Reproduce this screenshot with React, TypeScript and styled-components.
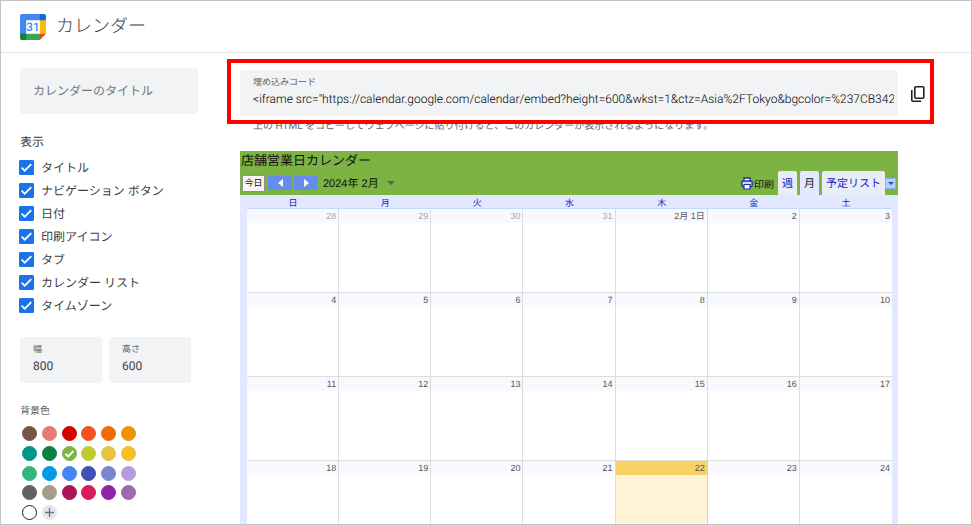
import React, { useState } from 'react';
import styled, { createGlobalStyle } from 'styled-components';

const GlobalStyle = createGlobalStyle`
  *, *::before, *::after { box-sizing: border-box; }
  body {
    margin: 0;
    background: #fff;
    color: #3c4043;
    font-family: Roboto, "Noto Sans CJK JP", sans-serif;
    text-rendering: geometricPrecision;
  }
  button, input { font: inherit; color: inherit; margin: 0; padding: 0; border: 0; background: none; text-rendering: inherit; }
  button { cursor: pointer; }
`;

const Page = styled.div`
  display: flex;
  flex-direction: column;
  height: 100vh;
  overflow: hidden;
  border: 1px solid #c4c4c4;
`;

const Header = styled.header`
  display: flex;
  align-items: center;
  flex: none;
  gap: 10px;
  height: 52px;
  padding: 0 19px;
  border-bottom: 1px solid #e2e2e2;
`;

const AppName = styled.h1`
  margin: 0;
  font-size: 18px;
  line-height: 24px;
  font-weight: 300;
  color: #3c4043;
`;

const Columns = styled.div`
  display: flex;
  flex: 1;
  min-height: 0;
`;

const Sidebar = styled.aside`
  display: flex;
  flex-direction: column;
  flex: none;
  width: 239px;
  padding: 15px 42px 0 19px;
`;

const Field = styled.label`
  display: flex;
  flex-direction: column;
  justify-content: center;
  flex: 1;
  min-width: 0;
  height: 46px;
  padding: 0 4px 0 13px;
  border-radius: 4px;
  background: #f1f3f4;
`;

const FieldLabel = styled.span`
  font-size: 9px;
  line-height: 12px;
  color: #5f6368;
`;

const FieldInput = styled.input<{ $code?: boolean }>`
  width: 100%;
  height: 20px;
  font-size: 12px;
  font-weight: ${(p) => (p.$code ? 300 : 400)};
  color: ${(p) => (p.$code ? '#000' : '#3c4043')};
  outline: none;
  text-overflow: clip;
  &::placeholder { color: #70757a; opacity: 1; }
`;

const TitleRow = styled.div`
  display: flex;
`;

const SizeRow = styled.div`
  display: flex;
  gap: 7px;
  margin: 20px 7px 0 0;
`;

const Group = styled.fieldset`
  margin: 18px 0 0;
  padding: 0;
  border: 0;
`;

const GroupTitle = styled.legend<{ $small?: boolean }>`
  padding: ${(p) => (p.$small ? 1 : 0)}px 0 0;
  font-size: ${(p) => (p.$small ? 10 : 12)}px;
  line-height: 20px;
  color: ${(p) => (p.$small ? '#5f6368' : '#3c4043')};
`;

const Options = styled.div`
  display: flex;
  flex-direction: column;
  padding-top: 4px;
`;

const Option = styled.label`
  display: flex;
  align-items: center;
  gap: 7px;
  height: 23px;
  margin-left: -1px;
  font-size: 12px;
`;

const Tick = styled.span`
  display: grid;
  width: 15px;
  height: 15px;
  > * { grid-area: 1 / 1; }
  svg { pointer-events: none; }
`;

const TickInput = styled.input`
  appearance: none;
  width: 15px;
  height: 15px;
  border: 1px solid #1a73e8;
  border-radius: 1px;
  &:checked { background: #1a73e8; }
`;

const Swatches = styled.div`
  display: grid;
  grid-template-columns: repeat(6, 15px);
  grid-auto-rows: 15px;
  justify-content: space-between;
  align-content: space-between;
  width: 114px;
  height: 94px;
  margin: 4px 0 0 2px;
`;

const Swatch = styled.label<{ $color: string; $edge?: string }>`
  display: grid;
  place-items: center;
  border-radius: 50%;
  background: ${(p) => p.$color};
  border: 1px solid ${(p) => p.$edge ?? p.$color};
  > * { grid-area: 1 / 1; }
`;

const SwatchInput = styled.input`
  appearance: none;
  width: 13px;
  height: 13px;
  border-radius: 50%;
`;

const AddColor = styled.button`
  display: grid;
  place-items: center;
  border-radius: 50%;
  background: #e4e7ea;
`;

const Main = styled.main`
  flex: 1;
  min-width: 0;
  padding: 17px 73px 0 0;
`;

const EmbedRow = styled.div`
  position: relative;
  display: flex;
  align-items: center;
`;

const Highlight = styled.div`
  position: absolute;
  inset: -11px -36px -8px -13px;
  border: 4px solid #fe0000;
  pointer-events: none;
`;

const CopyButton = styled.button`
  display: grid;
  place-items: center;
  width: 20px;
  height: 20px;
  margin: 2px -30px 0 10px;
`;

const Note = styled.p`
  margin: 0 13px;
  padding-top: 3px;
  font-size: 10px;
  line-height: 16px;
  color: #5f6368;
  white-space: nowrap;
`;

const Calendar = styled.section`
  margin-top: 16px;
  background: #e2e8ff;
  font-family: "Liberation Sans", "Noto Sans CJK JP", sans-serif;
  color: #111;
`;

const CalendarHead = styled.div`
  height: 44px;
  background: #7cb342;
`;

const CalendarTitle = styled.h2`
  margin: 0;
  padding-left: 1px;
  font-size: 13px;
  line-height: 20px;
  font-weight: 400;
`;

const Toolbar = styled.div`
  display: flex;
  align-items: center;
  height: 24px;
  padding: 0 2px;
`;

const Today = styled.button`
  width: 23px;
  height: 17px;
  border: 1px solid #8a9488;
  border-radius: 1px;
  background: #f6f6f6;
  font-size: 9px;
  line-height: 14px;
`;

const NavButton = styled.button`
  display: grid;
  place-items: center;
  width: 24px;
  height: 14px;
  margin-left: 2px;
  border-radius: 1px;
  background: #668cf0;
`;

const NavGroup = styled.div`
  display: flex;
  margin-left: 1px;
`;

const DateButton = styled.button`
  display: flex;
  align-items: center;
  gap: 8px;
  margin-left: 5px;
  font-size: 11px;
`;

const Print = styled.button`
  display: flex;
  align-items: center;
  gap: 1px;
  margin: 0 4px 0 auto;
  font-size: 10px;
`;

const Tabs = styled.div`
  display: flex;
  align-self: stretch;
  gap: 3px;
`;

const Tab = styled.button<{ $active?: boolean }>`
  padding: 0 4px;
  border-radius: 2px 2px 0 0;
  background: ${(p) => (p.$active ? '#e2e8ff' : '#e8eef7')};
  color: ${(p) => (p.$active ? '#222' : '#2a10cc')};
  font-size: 11px;
`;

const MenuButton = styled.button`
  display: grid;
  place-items: center;
  width: 11px;
  height: 11px;
  background: #b5d0f7;
  border: 1px solid #8fb4ea;
`;

const MonthTable = styled.table`
  width: calc(100% - 13px);
  margin-left: 7px;
  table-layout: fixed;
  border-collapse: separate;
  border-spacing: 0;
`;

const DayName = styled.th`
  height: 14px;
  padding: 3px 0 0;
  border-bottom: 1px solid #c3d9ff;
  color: #2a10cc;
  font-size: 9px;
  line-height: 10px;
  font-weight: 400;
  overflow: hidden;
`;

const DayCell = styled.td<{ $today?: boolean }>`
  height: 84px;
  padding: 0;
  vertical-align: top;
  background: ${(p) => (p.$today ? '#fff5d6' : '#fff')};
  border-right: 1px solid ${(p) => (p.$today ? '#fad163' : '#dddddd')};
  border-bottom: 1px solid #dddddd;
  &:last-child { border-right: 0; }
`;

const DayNumber = styled.div<{ $today?: boolean; $muted?: boolean }>`
  height: 14px;
  padding-right: 2px;
  background: ${(p) => (p.$today ? '#fad163' : '#f8f9ff')};
  color: ${(p) => (p.$muted ? '#a8a8a8' : '#555')};
  font-size: 9px;
  line-height: 14px;
  text-align: right;
`;

const colors = [
  '#795548', '#e67c73', '#d50000', '#f4511e', '#ef6c00', '#f09300',
  '#009688', '#0b8043', '#7cb342', '#c0ca33', '#e4c441', '#f6bf26',
  '#33b679', '#039be5', '#4285f4', '#3f51b5', '#7986cb', '#b39ddb',
  '#616161', '#a79b8e', '#ad1457', '#d81b60', '#8e24aa', '#9e69af',
  '#ffffff',
];

const options = ['タイトル', 'ナビゲーション ボタン', '日付', '印刷アイコン', 'タブ', 'カレンダー リスト', 'タイムゾーン'];
const dayNames = ['日', '月', '火', '水', '木', '金', '土'];
const weeks = [
  ['28', '29', '30', '31', '2月 1日', '2', '3'],
  ['4', '5', '6', '7', '8', '9', '10'],
  ['11', '12', '13', '14', '15', '16', '17'],
  ['18', '19', '20', '21', '22', '23', '24'],
];
const embedCode =
  '<iframe src="https://calendar.google.com/calendar/embed?height=600&wkst=1&ctz=Asia%2FTokyo&bgcolor=%237CB342';

const Logo = () => (
  <svg width="26" height="26" viewBox="-4 -4 200.5 200.5" aria-hidden="true">
    <path fill="#fff" d="M43 43h106v106H43z" />
    <path fill="#EA4335" d="M148.882 196.25l47.368-47.368-23.684-10.526-23.684 10.526-10.526 23.684z" />
    <path fill="#34A853" d="M33.092 172.566l10.526 23.684h105.263v-47.368H43.618z" />
    <path fill="#4285F4" d="M12.039-3.75C3.316-3.75-3.75 3.316-3.75 12.039v136.842l23.684 10.526 23.684-10.526V43.618h105.263l10.526-23.684L148.882-3.75z" />
    <path fill="#188038" d="M-3.75 148.882v31.579c0 8.724 7.066 15.789 15.789 15.789h31.579v-47.368z" />
    <path fill="#FBBC04" d="M148.882 43.618v105.263h47.368V43.618l-23.684-10.526z" />
    <path fill="#1967D2" d="M196.25 43.618V12.039c0-8.724-7.066-15.789-15.789-15.789h-31.579v47.368z" />
    <text x="96" y="129" textAnchor="middle" fontFamily="Roboto, sans-serif" fontWeight="500" fontSize="90" fill="#4285F4">31</text>
  </svg>
);

const CheckMark = () => (
  <svg width="15" height="15" viewBox="0 0 15 15" fill="none" stroke="#fff" strokeWidth="1.7" aria-hidden="true">
    <path d="M2.6 7.6l3.1 3.1 6.6-6.6" />
  </svg>
);

const CopyIcon = () => (
  <svg width="16" height="18" viewBox="0 0 16 18" fill="none" stroke="#202124" strokeWidth="1.6" aria-hidden="true">
    <rect x="4.8" y="1.8" width="9" height="11.4" rx="1" />
    <path d="M1.8 5v10.2q0 1 1 1h8.4" />
  </svg>
);

const PrinterIcon = () => (
  <svg width="12" height="13" viewBox="0 0 12 13" aria-hidden="true">
    <path d="M3 4V1h6v3" fill="#fff" stroke="#1c2fa8" strokeWidth="1.3" />
    <rect x=".8" y="4" width="10.4" height="5.6" rx="1.4" fill="#cdd8f7" stroke="#1c2fa8" strokeWidth="1.4" />
    <path d="M3 7.5h6V12H3z" fill="#fff" stroke="#1c2fa8" strokeWidth="1.2" />
  </svg>
);

export default function App() {
  const [color, setColor] = useState('#7cb342');
  return (
    <>
      <GlobalStyle />
      <Page>
        <Header>
          <Logo />
          <AppName>カレンダー</AppName>
        </Header>
        <Columns>
          <Sidebar>
            <TitleRow>
              <Field>
                <FieldInput aria-label="カレンダーのタイトル" placeholder="カレンダーのタイトル" />
              </Field>
            </TitleRow>
            <Group>
              <GroupTitle>表示</GroupTitle>
              <Options>
                {options.map((name) => (
                  <Option key={name}>
                    <Tick>
                      <TickInput type="checkbox" defaultChecked />
                      <CheckMark />
                    </Tick>
                    {name}
                  </Option>
                ))}
              </Options>
            </Group>
            <SizeRow>
              <Field>
                <FieldLabel>幅</FieldLabel>
                <FieldInput defaultValue="800" />
              </Field>
              <Field>
                <FieldLabel>高さ</FieldLabel>
                <FieldInput defaultValue="600" />
              </Field>
            </SizeRow>
            <Group>
              <GroupTitle $small>背景色</GroupTitle>
              <Swatches>
                {colors.map((c) => (
                  <Swatch key={c} $color={c} $edge={c === '#ffffff' ? '#202124' : undefined}>
                    <SwatchInput
                      type="radio"
                      name="background"
                      aria-label={c}
                      checked={color === c}
                      onChange={() => setColor(c)}
                    />
                    {color === c && (
                      <svg width="13" height="13" viewBox="0 0 13 13" fill="none" stroke="#fff" strokeWidth="2" aria-hidden="true">
                        <path d="M2.4 6.8l2.7 2.6 5.4-5.4" />
                      </svg>
                    )}
                  </Swatch>
                ))}
                <AddColor aria-label="色を追加">
                  <svg width="9" height="9" viewBox="0 0 9 9" stroke="#70757a" strokeWidth="1.3" aria-hidden="true">
                    <path d="M4.5 0v9M0 4.5h9" />
                  </svg>
                </AddColor>
              </Swatches>
            </Group>
          </Sidebar>
          <Main>
            <EmbedRow>
              <Field>
                <FieldLabel>埋め込みコード</FieldLabel>
                <FieldInput $code readOnly value={embedCode} />
              </Field>
              <CopyButton aria-label="コピー">
                <CopyIcon />
              </CopyButton>
              <Highlight />
            </EmbedRow>
            <Note>上の HTML をコピーしてウェブページに貼り付けると、このカレンダーが表示されるようになります。</Note>
            <Calendar>
              <CalendarHead>
                <CalendarTitle>店舗営業日カレンダー</CalendarTitle>
                <Toolbar>
                  <Today>今日</Today>
                  <NavGroup>
                    <NavButton aria-label="前へ">
                      <svg width="5" height="8" viewBox="0 0 5 8" fill="#fff"><path d="M5 0v8L0 4z" /></svg>
                    </NavButton>
                    <NavButton aria-label="次へ">
                      <svg width="5" height="8" viewBox="0 0 5 8" fill="#fff"><path d="M0 0v8l5-4z" /></svg>
                    </NavButton>
                  </NavGroup>
                  <DateButton>
                    2024年 2月
                    <svg width="8" height="4" viewBox="0 0 8 4" fill="#596258"><path d="M0 0h8L4 4z" /></svg>
                  </DateButton>
                  <Print>
                    <PrinterIcon />
                    印刷
                  </Print>
                  <Tabs>
                    <Tab>週</Tab>
                    <Tab $active>月</Tab>
                    <Tab>予定リスト</Tab>
                  </Tabs>
                  <MenuButton aria-label="カレンダーを選択">
                    <svg width="6" height="3" viewBox="0 0 6 3" fill="#1c56c4"><path d="M0 0h6L3 3z" /></svg>
                  </MenuButton>
                </Toolbar>
              </CalendarHead>
              <MonthTable>
                <thead>
                  <tr>
                    {dayNames.map((d) => (
                      <DayName key={d} scope="col">{d}</DayName>
                    ))}
                  </tr>
                </thead>
                <tbody>
                  {weeks.map((week, w) => (
                    <tr key={week[0]}>
                      {week.map((day, d) => (
                        <DayCell key={day} $today={day === '22'}>
                          <DayNumber $today={day === '22'} $muted={w === 0 && d < 4}>{day}</DayNumber>
                        </DayCell>
                      ))}
                    </tr>
                  ))}
                </tbody>
              </MonthTable>
            </Calendar>
          </Main>
        </Columns>
      </Page>
    </>
  );
}
